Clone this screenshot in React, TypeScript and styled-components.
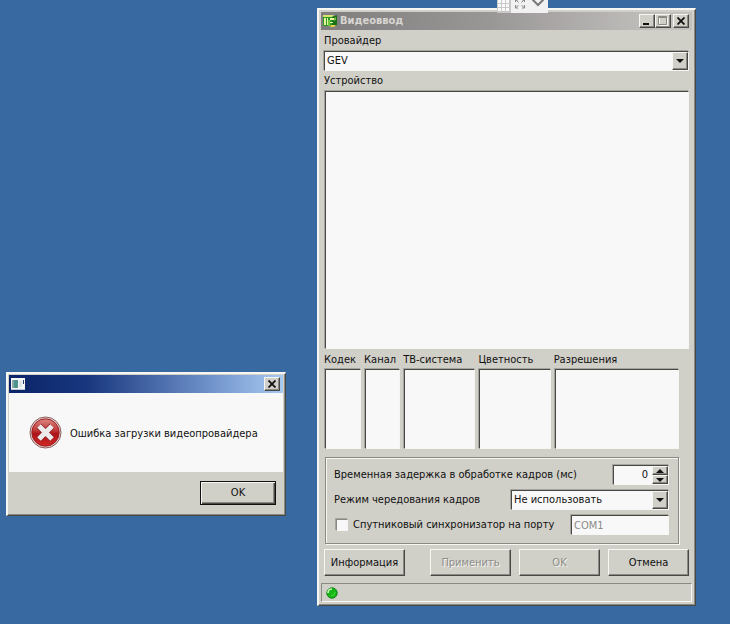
import React, { useState } from "react";
import styled, { createGlobalStyle, css } from "styled-components";

const face = "#d0cfc8";
const paper = "#f8f8f8";
const light = "#f6f6f3";
const shade = "#8a8984";
const dark = "#484844";

const GlobalStyle = createGlobalStyle`
  *, *::before, *::after { box-sizing: border-box; }
  body { margin: 0; background: #3869a0; }
  body, button, input, select {
    font-family: "DejaVu Sans Condensed", "DejaVu Sans", sans-serif;
    font-size: 11px;
    line-height: 14px;
    color: #111;
  }
  svg { display: block; }
`;

const sunken = css`
  border: 1px solid;
  border-color: ${dark} ${light} ${light} ${dark};
  box-shadow: -1px -1px 0 #a5a49f;
`;

const raised = css`
  background: ${face};
  border: 1px solid;
  border-color: ${light} ${dark} ${dark} ${light};
  box-shadow: inset -1px -1px 0 ${shade};
`;

const Desktop = styled.main`
  display: flex;
  align-items: flex-start;
  gap: 31px;
  min-height: 100vh;
  padding: 8px 34px 18px 6px;
  background: #3869a0;
`;

const Window = styled.section`
  ${raised}
  border-width: 2px;
  border-color: ${light} ${dark} ${dark} ${light};
  border-right-width: 1px;
  border-bottom-width: 1px;
  min-width: 0;
`;

const SettingsWindow = styled(Window)`
  flex: 1;
  padding: 2px 3px 3px 2px;
`;

const ErrorDialog = styled(Window)`
  flex: 0 0 280px;
  margin-top: 364px;
  padding: 1px 2px 2px 1px;
`;

const TitleBar = styled.header<{ $active?: boolean }>`
  display: flex;
  align-items: center;
  gap: 2px;
  height: 18px;
  padding: 0 3px 0 1px;
  color: #d8d6d2;
  background: ${(p) =>
    p.$active
      ? "linear-gradient(90deg, #0c2468 0%, #17367d 28%, #6d8fc8 72%, #a6caf0 100%)"
      : "linear-gradient(90deg, #7f7d7d 0%, #999696 45%, #c3c1be 92%)"};
`;

const Title = styled.h1`
  flex: 1;
  margin: 0;
  font-size: 11px;
  font-weight: bold;
  line-height: 16px;
`;

const CaptionButtons = styled.div`
  display: flex;
  margin-left: auto;
`;

const CaptionButton = styled.button`
  ${raised}
  display: grid;
  place-items: center;
  width: 16px;
  height: 14px;
  padding: 0;
  &:last-child:not(:first-child) { margin-left: 2px; }
`;

const Form = styled.form`
  display: flex;
  flex-direction: column;
`;

const Fields = styled.div`
  display: flex;
  flex-direction: column;
  padding: 4px 3px 0;
`;

const Field = styled.div`
  display: flex;
  flex-direction: column;
  gap: 3px;
  margin-bottom: 3px;
`;

const FieldLabel = styled.label`
  line-height: 14px;
  white-space: nowrap;
`;

const ComboBox = styled.div`
  ${sunken}
  position: relative;
  height: 20px;
  background: ${paper};
`;

const Select = styled.select`
  appearance: none;
  display: block;
  width: 100%;
  height: 18px;
  padding: 0 20px 0 2px;
  border: 0;
  border-radius: 0;
  outline: 0;
  background: transparent;
`;

const ComboArrow = styled.span`
  ${raised}
  position: absolute;
  top: 0;
  right: 0;
  bottom: 0;
  width: 16px;
  display: grid;
  place-items: center;
  pointer-events: none;
`;

const ListBox = styled.div<{ $height: number }>`
  ${sunken}
  height: ${(p) => p.$height}px;
  margin-left: 1px;
  background: ${paper};
`;

const Columns = styled.div`
  display: grid;
  grid-template-columns: 37fr 36fr 72fr 72fr 125fr;
  gap: 3px;
  padding: 1px 10px 0 0;
`;

const Column = styled.div`
  display: flex;
  flex-direction: column;
  gap: 2px;
  min-width: 0;
`;

const Group = styled.fieldset`
  display: flex;
  flex-direction: column;
  gap: 5px;
  min-width: 0;
  margin: 8px 10px 0 1px;
  padding: 7px 9px 8px 8px;
  border: 1px solid ${shade};
  box-shadow: 1px 1px 0 ${light}, inset 1px 1px 0 ${light};
`;

const GroupRow = styled.div`
  display: flex;
  align-items: center;
  justify-content: space-between;
  height: 20px;
`;

const ModeCombo = styled(ComboBox)`
  width: 158px;
`;

const Spinner = styled.div`
  ${sunken}
  display: flex;
  width: 56px;
  height: 20px;
  background: ${paper};
`;

const SpinInput = styled.input`
  flex: 1;
  min-width: 0;
  padding: 0 4px 0 0;
  border: 0;
  outline: 0;
  background: transparent;
  text-align: right;
`;

const SpinButtons = styled.div`
  display: grid;
  grid-template-rows: 1fr 1fr;
  width: 16px;
`;

const SpinButton = styled.button`
  ${raised}
  display: grid;
  place-items: center;
  min-height: 0;
  padding: 0;
`;

const CheckLabel = styled.label`
  display: flex;
  align-items: center;
  gap: 5px;
  white-space: nowrap;
`;

const CheckBox = styled.input`
  ${sunken}
  appearance: none;
  width: 12px;
  height: 12px;
  margin: 0 0 0 2px;
  border-color: ${shade} ${light} ${light} ${shade};
  background: ${paper};
  &:checked { background: radial-gradient(#222 40%, ${paper} 45%); }
`;

const PortInput = styled.input`
  ${sunken}
  width: 98px;
  height: 20px;
  padding: 0 2px;
  border-radius: 0;
  background: ${paper};
  color: #8b8b88;
`;

const Actions = styled.div`
  display: flex;
  gap: 8px;
  padding: 5px 3px 0;
`;

const PushButton = styled.button<{ $default?: boolean }>`
  ${raised}
  width: 81px;
  height: 27px;
  padding: 0;
  &:first-child:not(:last-child) { margin-right: auto; }
  &:disabled { color: #8d8c87; text-shadow: 1px 1px 0 ${light}; }
  ${(p) =>
    p.$default &&
    css`
      width: 76px;
      height: 24px;
      border-color: #111;
      box-shadow: inset 1px 1px 0 ${light}, inset -1px -1px 0 ${dark},
        inset -2px -2px 0 ${shade};
    `}
`;

const StatusBar = styled.footer`
  display: flex;
  align-items: center;
  height: 19px;
  margin-top: 7px;
  padding-left: 4px;
  border: 1px solid;
  border-color: ${shade} ${light} ${light} ${shade};
`;

const Message = styled.div`
  display: flex;
  align-items: center;
  gap: 8px;
  height: 79px;
  padding: 0 20px;
  background: ${paper};
`;

const MessageText = styled.p`
  margin: 2px 0 0;
  white-space: nowrap;
`;

const DialogActions = styled.div`
  display: flex;
  justify-content: flex-end;
  padding: 9px 7px 8px;
`;

const SessionBar = styled.div`
  position: absolute;
  top: 0;
  left: calc(50% + 132px);
  display: flex;
  width: 51px;
  height: 13px;
  background: #f1f1f1;
`;

const DownArrow = () => (
  <svg width="8" height="4" viewBox="0 0 8 4" aria-hidden="true">
    <path d="M0 0H8L4 4Z" fill="#111" />
  </svg>
);

const UpArrow = () => (
  <svg width="8" height="4" viewBox="0 0 8 4" aria-hidden="true">
    <path d="M0 4H8L4 0Z" fill="#111" />
  </svg>
);

const CloseGlyph = () => (
  <svg width="8" height="8" viewBox="0 0 8 8" aria-hidden="true">
    <path d="M0.5 0.5L7.5 7.5M7.5 0.5L0.5 7.5" stroke="#111" strokeWidth="1.8" />
  </svg>
);

const MinimizeGlyph = () => (
  <svg width="10" height="10" viewBox="0 0 10 10" aria-hidden="true">
    <path d="M1 7H7V9H1Z" fill="#111" />
  </svg>
);

const MaximizeGlyph = () => (
  <svg width="10" height="10" viewBox="0 0 10 10" aria-hidden="true">
    <path d="M1.5 1.5H9.5V9.5H1.5Z" fill="none" stroke="#f6f6f3" />
    <path d="M0.5 0.5H8.5V8.5H0.5ZM0.5 1.5H8.5" fill="none" stroke="#8a8984" />
  </svg>
);

const CaptureIcon = () => (
  <svg width="16" height="14" viewBox="0 0 16 14" aria-hidden="true">
    <path d="M1 2H11V12H1Z" fill="#2f9a24" />
    <path d="M10 3L15 1V11L10 13Z" fill="#187018" />
    <path d="M1 1H12L10 3H1Z" fill="#d9e26e" />
    <path d="M2 4H4V11H2ZM5 4H6V11H5ZM8 4H12V6H8ZM8 8H11V9H8Z" fill="#e5f4a0" />
    <path d="M6 6H8V12H6Z" fill="#70c83c" />
    <path d="M9 11H14L12 13H8Z" fill="#e8cf45" />
    <path d="M12 4L14 3V6L12 7Z" fill="#72b83b" />
  </svg>
);

const AppIcon = () => (
  <svg width="16" height="14" viewBox="0 0 16 14" aria-hidden="true">
    <path d="M1 1H15V13H1Z" fill="#f4f6f6" />
    <path d="M2 3H8V11H2Z" fill="#4d948d" />
    <path d="M2 3H4V11H2Z" fill="#8ca7a8" />
    <path d="M9 4H12V10H9Z" fill="#dbe5e5" />
    <path d="M13 3H14V7H13Z" fill="#263b6b" />
    <path d="M1 12H15V13H1Z" fill="#b9c8d4" />
  </svg>
);

const ErrorIcon = () => (
  <svg width="33" height="33" viewBox="0 0 33 33" aria-hidden="true">
    <defs>
      <linearGradient id="errorFill" x1="0" y1="0" x2="0" y2="1">
        <stop offset="0" stopColor="#d98783" />
        <stop offset="0.42" stopColor="#c13a38" />
        <stop offset="0.55" stopColor="#ad1418" />
        <stop offset="1" stopColor="#cf2a28" />
      </linearGradient>
    </defs>
    <circle cx="16.5" cy="16.5" r="15.5" fill="#dedada" stroke="#8d5754" />
    <circle cx="16.5" cy="16.5" r="13.7" fill="url(#errorFill)" stroke="#a31d20" />
    <path d="M10 10L23 23M23 10L10 23" stroke="#8e2022" strokeWidth="6.5" />
    <path d="M10 10L23 23M23 10L10 23" stroke="#eceaea" strokeWidth="5" />
  </svg>
);

const StatusLight = () => (
  <svg width="12" height="12" viewBox="0 0 12 12" role="img" aria-label="Готов">
    <circle cx="6" cy="6" r="5.2" fill="#17b617" stroke="#16801c" />
    <path d="M2 6Q2 2 6 2" fill="none" stroke="#c0f5ae" strokeWidth="1.7" />
    <path d="M5 9Q8.5 9 9 5" fill="none" stroke="#43df36" />
  </svg>
);

const SessionGlyphs = () => (
  <svg width="51" height="13" viewBox="0 0 51 13" aria-hidden="true">
    <path d="M0 0H14V13H0Z" fill="#c8c8c8" />
    <path
      d="M1 0H4V3H1ZM5 0H8V3H5ZM9 0H12V3H9ZM1 4H4V7H1ZM5 4H8V7H5ZM9 4H12V7H9ZM1 8H4V11H1ZM5 8H8V11H5ZM9 8H12V11H9Z"
      fill="#fbfbfb"
    />
    <path
      d="M18.5 2V0M18.5 5V8H21M27.5 5V8H25M18.5 0H21M27.5 0H25M27.5 0V2M18.5 8L21.5 5M27.5 8L24.5 5M19 0L21.5 2.5M27 0L24.5 2.5"
      fill="none"
      stroke="#8b8b8b"
    />
    <path d="M35 -1L41 5L47 -1" fill="none" stroke="#777" strokeWidth="2" />
  </svg>
);

const modes = [
  { id: "codec", label: "Кодек" },
  { id: "channel", label: "Канал" },
  { id: "tv", label: "ТВ-система" },
  { id: "color", label: "Цветность" },
  { id: "resolution", label: "Разрешения" },
];

export default function App() {
  const [delay, setDelay] = useState(0);
  const [sync, setSync] = useState(false);

  return (
    <>
      <GlobalStyle />
      <Desktop>
        <ErrorDialog role="alertdialog" aria-labelledby="error-text">
          <TitleBar $active>
            <AppIcon />
            <CaptionButtons>
              <CaptionButton type="button" aria-label="Закрыть">
                <CloseGlyph />
              </CaptionButton>
            </CaptionButtons>
          </TitleBar>
          <Message>
            <ErrorIcon />
            <MessageText id="error-text">Ошибка загрузки видеопровайдера</MessageText>
          </Message>
          <DialogActions>
            <PushButton type="button" $default>OK</PushButton>
          </DialogActions>
        </ErrorDialog>

        <SettingsWindow aria-labelledby="window-title">
          <TitleBar>
            <CaptureIcon />
            <Title id="window-title">Видеоввод</Title>
            <CaptionButtons>
              <CaptionButton type="button" aria-label="Свернуть"><MinimizeGlyph /></CaptionButton>
              <CaptionButton type="button" aria-label="Развернуть"><MaximizeGlyph /></CaptionButton>
              <CaptionButton type="button" aria-label="Закрыть"><CloseGlyph /></CaptionButton>
            </CaptionButtons>
          </TitleBar>
          <Form onSubmit={(e) => e.preventDefault()}>
            <Fields>
              <Field>
                <FieldLabel htmlFor="provider">Провайдер</FieldLabel>
                <ComboBox>
                  <Select id="provider" defaultValue="GEV">
                    <option>GEV</option>
                  </Select>
                  <ComboArrow><DownArrow /></ComboArrow>
                </ComboBox>
              </Field>
              <Field>
                <FieldLabel as="span" id="device">Устройство</FieldLabel>
                <ListBox $height={258} role="listbox" aria-labelledby="device" tabIndex={0} />
              </Field>
              <Columns>
                {modes.map((mode) => (
                  <Column key={mode.id}>
                    <FieldLabel as="span" id={mode.id}>{mode.label}</FieldLabel>
                    <ListBox $height={80} role="listbox" aria-labelledby={mode.id} tabIndex={0} />
                  </Column>
                ))}
              </Columns>
              <Group>
                <GroupRow>
                  <FieldLabel htmlFor="delay">Временная задержка в обработке кадров (мс)</FieldLabel>
                  <Spinner>
                    <SpinInput
                      id="delay"
                      inputMode="numeric"
                      value={delay}
                      onChange={(e) => setDelay(Number(e.target.value) || 0)}
                    />
                    <SpinButtons>
                      <SpinButton type="button" aria-label="Увеличить" onClick={() => setDelay(delay + 1)}>
                        <UpArrow />
                      </SpinButton>
                      <SpinButton type="button" aria-label="Уменьшить" onClick={() => setDelay(Math.max(0, delay - 1))}>
                        <DownArrow />
                      </SpinButton>
                    </SpinButtons>
                  </Spinner>
                </GroupRow>
                <GroupRow>
                  <FieldLabel htmlFor="interlace">Режим чередования кадров</FieldLabel>
                  <ModeCombo>
                    <Select id="interlace" defaultValue="Не использовать">
                      <option>Не использовать</option>
                    </Select>
                    <ComboArrow><DownArrow /></ComboArrow>
                  </ModeCombo>
                </GroupRow>
                <GroupRow>
                  <CheckLabel>
                    <CheckBox type="checkbox" checked={sync} onChange={(e) => setSync(e.target.checked)} />
                    Спутниковый синхронизатор на порту
                  </CheckLabel>
                  <PortInput aria-label="Порт" defaultValue="COM1" disabled={!sync} />
                </GroupRow>
              </Group>
            </Fields>
            <Actions>
              <PushButton type="button">Информация</PushButton>
              <PushButton type="button" disabled>Применить</PushButton>
              <PushButton type="submit" disabled>OK</PushButton>
              <PushButton type="button">Отмена</PushButton>
            </Actions>
          </Form>
          <StatusBar><StatusLight /></StatusBar>
        </SettingsWindow>
      </Desktop>
      <SessionBar><SessionGlyphs /></SessionBar>
    </>
  );
}
